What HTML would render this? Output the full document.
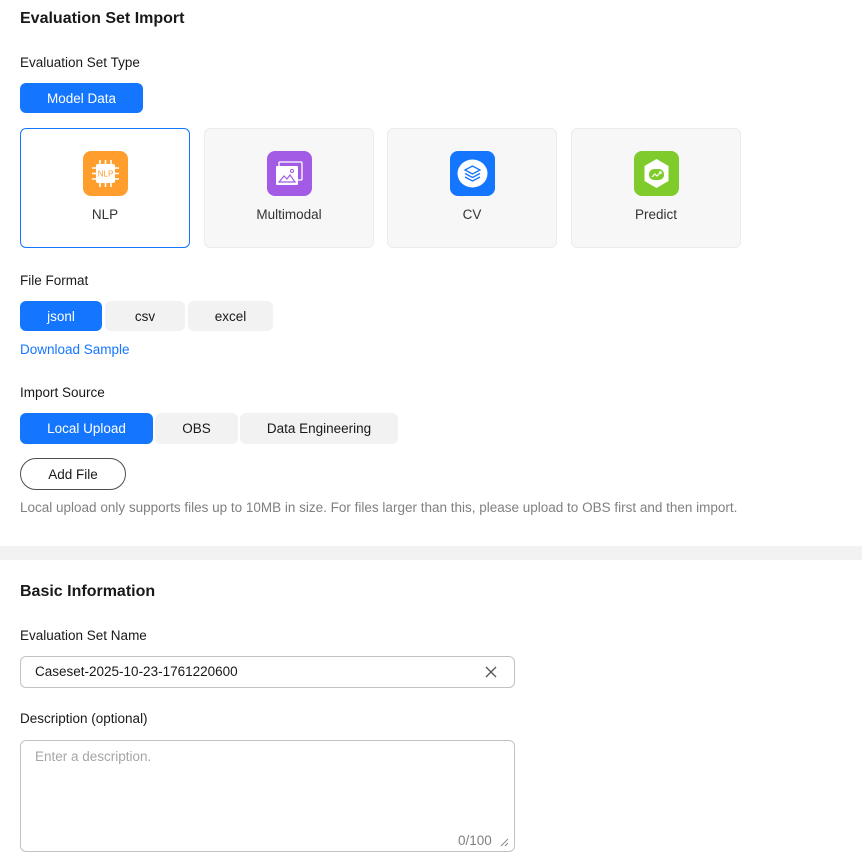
<!DOCTYPE html>
<html><head><style>
*{box-sizing:border-box;margin:0;padding:0}
body{width:862px;height:858px;background:#fff;font-family:"Liberation Sans",Arial,sans-serif;font-size:13.5px;color:#191919;position:relative;overflow:hidden}
.a{position:absolute;white-space:nowrap}
.h{font-size:16px;font-weight:bold}
.btn{position:absolute;display:flex;align-items:center;justify-content:center;border-radius:6px;background:#f2f2f2;color:#191919;font-size:13.5px}
.on{background:#1476ff;color:#fff}
.card{position:absolute;top:128px;width:170px;height:120px;border-radius:6px;background:#f7f7f7;border:1px solid #ececec}
.card .ic{position:absolute;left:62px;top:22px;width:45px;height:45px;border-radius:8px}
.card .lb{position:absolute;left:0;right:0;top:78px;text-align:center;color:#333}
</style></head><body>
<div class="a h" style="left:20px;top:10px">Evaluation Set Import</div>
<div class="a" style="left:20px;top:55px">Evaluation Set Type</div>
<div class="btn on" style="left:20px;top:83px;width:123px;height:30px">Model Data</div>

<div class="card" style="left:20px;background:#fff;border-color:#1476ff">
<div class="ic" style="background:#ff9e2c"><svg width="45" height="45" viewBox="0 0 45 45"><g stroke="#fff" stroke-width="1.6"><path d="M17 9v5M22.5 9v5M28 9v5M17 31v5M22.5 31v5M28 31v5M9 17h5M9 22.5h5M9 28h5M31 17h5M31 22.5h5M31 28h5"/></g><rect x="13" y="13" width="19" height="19" rx="2" fill="#fff"/><text x="22.5" y="25.5" text-anchor="middle" font-size="8" fill="#ff9e2c" font-family="Liberation Sans">NLP</text></svg></div>
<div class="lb">NLP</div></div>
<div class="card" style="left:204px">
<div class="ic" style="background:#a35be6"><svg width="45" height="45" viewBox="0 0 45 45"><rect x="12" y="11" width="23" height="18" rx="1" fill="none" stroke="#fff" stroke-width="1.3"/><rect x="9" y="15" width="22" height="19" rx="1" fill="#fff"/><path d="M12 31l5-6 3 3 3-4 5 7z" fill="none" stroke="#a35be6" stroke-width="1.2"/><circle cx="25" cy="20" r="1.5" fill="none" stroke="#a35be6"/></svg></div>
<div class="lb">Multimodal</div></div>
<div class="card" style="left:387px">
<div class="ic" style="background:#1476ff"><svg width="45" height="45" viewBox="0 0 45 45"><ellipse cx="22.5" cy="22.5" rx="15" ry="14" fill="#fff"/><g fill="none" stroke="#1476ff" stroke-width="1.3"><path d="M15 19l7.5-4 7.5 4-7.5 4z"/><path d="M15 22.5l7.5 4 7.5-4"/><path d="M15 26l7.5 4 7.5-4"/></g></svg></div>
<div class="lb">CV</div></div>
<div class="card" style="left:571px">
<div class="ic" style="background:#7fcb2b"><svg width="45" height="45" viewBox="0 0 45 45"><path d="M22.5 8l12 7v15l-12 7-12-7V15z" fill="#fff"/><rect x="15" y="18" width="15" height="11" rx="5" fill="#7fcb2b"/><path d="M18 26l3-3 2 2 4-4M25 21h2v2" fill="none" stroke="#fff" stroke-width="1.2"/></svg></div>
<div class="lb">Predict</div></div>

<div class="a" style="left:20px;top:273px">File Format</div>
<div class="btn on" style="left:20px;top:301px;width:82px;height:30px">jsonl</div>
<div class="btn" style="left:105px;top:301px;width:80px;height:30px">csv</div>
<div class="btn" style="left:188px;top:301px;width:85px;height:30px">excel</div>
<div class="a" style="left:20px;top:342px;color:#1476ff">Download Sample</div>

<div class="a" style="left:20px;top:385px">Import Source</div>
<div class="btn on" style="left:20px;top:413px;width:133px;height:31px">Local Upload</div>
<div class="btn" style="left:155px;top:413px;width:83px;height:31px">OBS</div>
<div class="btn" style="left:240px;top:413px;width:158px;height:31px">Data Engineering</div>
<div class="btn" style="left:20px;top:458px;width:106px;height:32px;background:#fff;border:1px solid #4d4d4d;border-radius:16px">Add File</div>
<div class="a" style="left:20px;top:500px;color:#808080">Local upload only supports files up to 10MB in size. For files larger than this, please upload to OBS first and then import.</div>

<div class="a" style="left:0;top:546px;width:862px;height:14px;background:#f2f2f2"></div>

<div class="a h" style="left:20px;top:583px">Basic Information</div>
<div class="a" style="left:20px;top:628px">Evaluation Set Name</div>
<div class="a" style="left:20px;top:656px;width:495px;height:32px;border:1px solid #c2c2c2;border-radius:6px"></div>
<div class="a" style="left:35px;top:664px">Caseset-2025-10-23-1761220600</div>
<svg class="a" style="left:485px;top:666px" width="12" height="12" viewBox="0 0 12 12"><path d="M1 1l10 10M11 1L1 11" stroke="#555" stroke-width="1.3"/></svg>
<div class="a" style="left:20px;top:711px">Description (optional)</div>
<div class="a" style="left:20px;top:740px;width:495px;height:112px;border:1px solid #c2c2c2;border-radius:6px"></div>
<div class="a" style="left:35px;top:749px;color:#a6a6a6">Enter a description.</div>
<div class="a" style="left:458px;top:833px;color:#808080">0/100</div>
<svg class="a" style="left:499px;top:837px" width="10" height="10" viewBox="0 0 10 10"><path d="M2 9l7-7M6 9l3-3" stroke="#888" stroke-width="1"/></svg>
</body></html>
